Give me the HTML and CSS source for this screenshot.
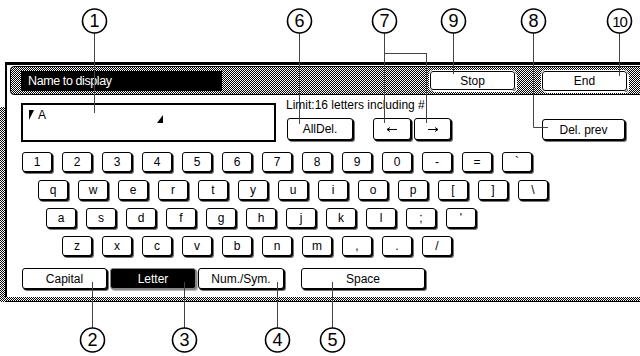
FILE: index.html
```html
<!DOCTYPE html>
<html lang="en">
<head>
    <meta charset="UTF-8">
    <meta name="viewport" content="width=device-width, initial-scale=1.0">
    <title>Name to display</title>
    <link rel="stylesheet" href="styles.css">
</head>
<body>
    <div class="sheet">
        <div class="panel">
            <!-- Title bar -->
            <div class="title-bar">
                <div class="title">Name to display</div>
                <button class="btn btn-bar btn-stop">Stop</button>
                <button class="btn btn-bar btn-end">End</button>
            </div>

            <!-- Entry field and edit buttons -->
            <div class="entry-row">
                <div class="entry-box">
                    <svg class="mark mark-start" width="5" height="10" viewBox="0 0 5 10"><polygon points="0,0 5,0 0,10"/></svg>
                    <span class="entry-text">A</span>
                    <svg class="mark mark-end" width="6" height="8" viewBox="0 0 6 8"><polygon points="6,0 6,8 0,8"/></svg>
                </div>
                <div class="entry-side">
                    <div class="limit">Limit:16 letters including #</div>
                    <div class="entry-buttons">
                        <button class="btn btn-alldel">AllDel.</button>
                        <div class="cursor-keys">
                            <button class="btn btn-left"><svg width="12" height="7" viewBox="0 0 12 7"><path d="M1 3.5H11M1 3.5L4 1.5M1 3.5L4 5.5"/></svg></button>
                            <button class="btn btn-right"><svg width="12" height="7" viewBox="0 0 12 7"><path d="M1 3.5H11M11 3.5L8 1.5M11 3.5L8 5.5"/></svg></button>
                        </div>
                        <button class="btn btn-delprev">Del. prev</button>
                    </div>
                </div>
            </div>

            <!-- Keyboard -->
            <div class="keys row-1">
                <button class="key">1</button><button class="key">2</button><button class="key">3</button><button class="key">4</button>
                <button class="key">5</button><button class="key">6</button><button class="key">7</button><button class="key">8</button>
                <button class="key">9</button><button class="key">0</button><button class="key">-</button><button class="key">=</button>
                <button class="key">`</button>
            </div>
            <div class="keys row-2">
                <button class="key">q</button><button class="key">w</button><button class="key">e</button><button class="key">r</button>
                <button class="key">t</button><button class="key">y</button><button class="key">u</button><button class="key">i</button>
                <button class="key">o</button><button class="key">p</button><button class="key">[</button><button class="key">]</button>
                <button class="key">\</button>
            </div>
            <div class="keys row-3">
                <button class="key">a</button><button class="key">s</button><button class="key">d</button><button class="key">f</button>
                <button class="key">g</button><button class="key">h</button><button class="key">j</button><button class="key">k</button>
                <button class="key">l</button><button class="key">;</button><button class="key">'</button>
            </div>
            <div class="keys row-4">
                <button class="key">z</button><button class="key">x</button><button class="key">c</button><button class="key">v</button>
                <button class="key">b</button><button class="key">n</button><button class="key">m</button><button class="key">,</button>
                <button class="key">.</button><button class="key">/</button>
            </div>

            <!-- Mode buttons -->
            <div class="modes">
                <button class="btn btn-mode btn-capital">Capital</button>
                <button class="btn btn-mode btn-letter active">Letter</button>
                <button class="btn btn-mode btn-numsym">Num./Sym.</button>
                <button class="btn btn-mode btn-space">Space</button>
            </div>
            <div class="panel-foot"></div>
        </div>

        <!-- Callout numbers -->
        <svg class="callouts" width="640" height="356" viewBox="0 0 640 356">
            <path class="leader" d="M94.5 33V113M299.5 33V124M384.5 33V123M384.5 53.5H426.5M426.5 53V123M453.5 33V74M533.5 33V127.5H548M619.5 33V76M92.5 282V328M184.5 282V328M277.5 282V328M332.5 282V328"/>
            <circle cx="94.5" cy="21" r="12"/><text x="94.5" y="27">1</text>
            <circle cx="299.5" cy="21" r="12"/><text x="299.5" y="27">6</text>
            <circle cx="384.5" cy="21" r="12"/><text x="384.5" y="27">7</text>
            <circle cx="453.5" cy="21" r="12"/><text x="453.5" y="27">9</text>
            <circle cx="533.5" cy="21" r="12"/><text x="533.5" y="27">8</text>
            <circle cx="619.5" cy="21" r="12"/><text class="two-digit" x="619.5" y="26.5">10</text>
            <circle cx="92.5" cy="340" r="12"/><text x="92.5" y="346">2</text>
            <circle cx="184.5" cy="340" r="12"/><text x="184.5" y="346">3</text>
            <circle cx="277.5" cy="340" r="12"/><text x="277.5" y="346">4</text>
            <circle cx="332.5" cy="340" r="12"/><text x="332.5" y="346">5</text>
        </svg>
    </div>
</body>
</html>
```

FILE: styles.css
```css
* {
    box-sizing: border-box;
}
body {
    margin: 0;
    font-family: "Liberation Sans", Arial, sans-serif;
    font-size: 12px;
    color: #000;
    background-color: #fff;
}
.sheet {
    position: relative;
    width: 640px;
    height: 356px;
    overflow: hidden;
}
.panel {
    position: relative;
    width: 640px;
    margin: 62px 0 0 5px;
    border-top: 3px solid #000;
    border-left: 2px solid #000;
}
.panel::before {
    content: "";
    position: absolute;
    left: -7px;
    top: 42px;
    bottom: 0;
    width: 5px;
    background: repeating-conic-gradient(#000 0 25%, #fff 0 50%) 0 0 / 2px 2px;
}
.panel-foot {
    height: 5px;
    margin: 8px 0 0 -7px;
    border-bottom: 1px solid #000;
    background: repeating-conic-gradient(#000 0 25%, #fff 0 50%) 0 0 / 2px 2px;
}

/* generic button reset */
.btn, .key {
    padding: 0;
    font: 12px "Liberation Sans", Arial, sans-serif;
    color: #000;
    background-color: #fff;
    border: 1px solid #000;
    border-radius: 3px;
    box-shadow: 1px 1px 0 #000, 2px 2px 0 #777;
    text-align: center;
    cursor: pointer;
}

/* title bar */
.title-bar {
    display: flex;
    align-items: center;
    width: 640px;
    height: 29px;
    margin: 1px 0 0 3px;
    border: 1px solid #000;
    border-radius: 4px;
    background: repeating-conic-gradient(#000 0 25%, #fff 0 50%) 0 0 / 2px 2px;
}
.title {
    width: 201px;
    height: 20px;
    margin-left: 10px;
    padding-left: 7px;
    background-color: #000;
    color: #fff;
    font-size: 12.5px;
    line-height: 20px;
    letter-spacing: -0.4px;
}
.btn-bar {
    width: 85px;
    height: 19px;
    outline: 1px solid #fff;
    box-shadow: 1px 1px 0 #000, 2px 2px 0 #fff;
}
.btn-stop {
    margin-left: 208px;
}
.btn-end {
    margin-left: 27px;
    height: 20px;
}

/* entry row */
.entry-row {
    display: flex;
    align-items: flex-start;
    margin-top: 1px;
    padding-left: 14px;
}
.entry-box {
    display: flex;
    align-items: flex-start;
    width: 255px;
    height: 39px;
    margin-top: 7px;
    padding: 5px 0 0 6px;
    border: 2px solid #000;
}
.mark {
    display: block;
    fill: #000;
}
.entry-text {
    margin: -1px 0 0 4px;
    font-size: 12px;
    line-height: 12px;
}
.mark-end {
    margin: 5px 0 0 111px;
}
.entry-side {
    margin: 3px 0 0 10px;
}
.limit {
    line-height: 13px;
}
.entry-buttons {
    display: flex;
    align-items: flex-start;
    margin-top: 6px;
}
.btn-alldel {
    width: 66px;
    height: 22px;
    margin-left: 1px;
}
.cursor-keys {
    display: flex;
    margin-left: 20px;
}
.cursor-keys .btn {
    height: 22px;
    display: flex;
    align-items: center;
    justify-content: center;
}
.cursor-keys svg {
    fill: none;
    stroke: #000;
    stroke-width: 1;
}
.btn-left {
    width: 38px;
}
.btn-right {
    width: 37px;
    margin-left: 3px;
}
.btn-delprev {
    width: 83px;
    height: 21px;
    margin: 1px 0 0 91px;
}

/* keyboard */
.keys {
    display: flex;
    gap: 10px;
    margin-top: 8px;
}
.row-1 {
    margin-top: 10px;
    padding-left: 15px;
}
.row-2 {
    padding-left: 31px;
}
.row-3 {
    padding-left: 39px;
}
.row-4 {
    padding-left: 55px;
}
.key {
    width: 30px;
    height: 20px;
    line-height: 18px;
}

/* mode buttons */
.modes {
    display: flex;
    margin-top: 12px;
    padding-left: 15px;
}
.btn-mode {
    height: 21px;
}
.btn-capital {
    width: 85px;
}
.btn-letter {
    width: 86px;
    margin-left: 3px;
}
.btn-numsym {
    width: 86px;
    margin-left: 2px;
}
.btn-space {
    width: 124px;
    margin-left: 17px;
}
.btn-mode.active {
    background-color: #000;
    color: #fff;
    border-color: #888;
    box-shadow: 1px 1px 0 #888, 2px 2px 0 #bbb;
}

/* callouts */
.callouts {
    position: absolute;
    left: 0;
    top: 0;
    pointer-events: none;
}
.callouts .leader {
    fill: none;
    stroke: #444;
    stroke-width: 1;
}
.callouts circle {
    fill: #fff;
    stroke: #000;
    stroke-width: 1.6;
}
.callouts text {
    font-family: "Liberation Sans", Arial, sans-serif;
    font-size: 18px;
    text-anchor: middle;
}
.callouts .two-digit {
    font-size: 15px;
    letter-spacing: -1px;
}
```
